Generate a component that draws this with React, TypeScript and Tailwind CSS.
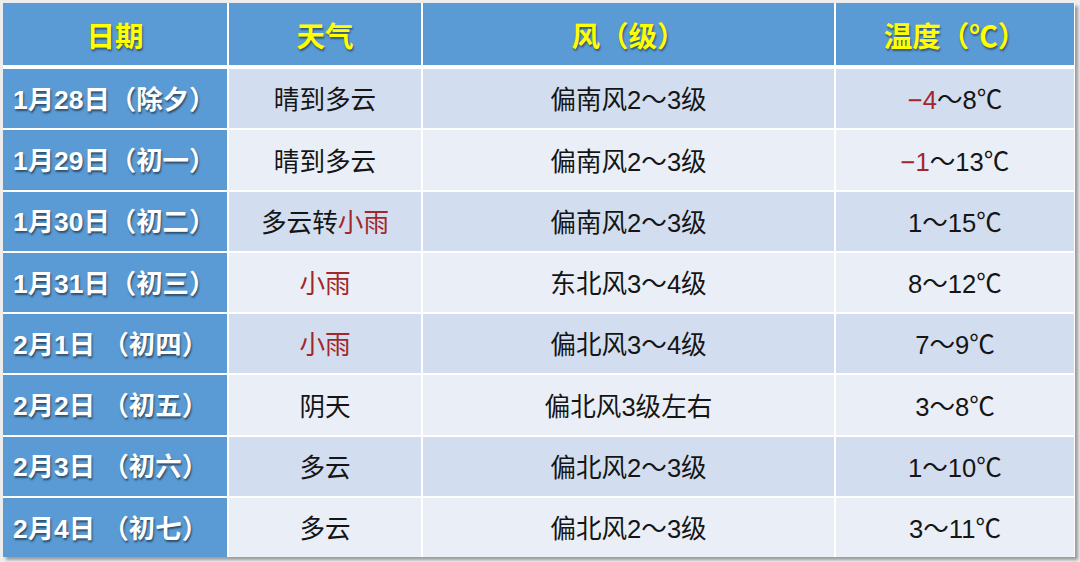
import React from "react";

type Seg = { t: string; red?: boolean };
type Row = { date: string; weather: Seg[]; wind: string; temp: Seg[] };

const rows: Row[] = [
  { date: "1月28日（除夕）", weather: [{ t: "晴到多云" }], wind: "偏南风2～3级", temp: [{ t: "−4", red: true }, { t: "～8℃" }] },
  { date: "1月29日（初一）", weather: [{ t: "晴到多云" }], wind: "偏南风2～3级", temp: [{ t: "−1", red: true }, { t: "～13℃" }] },
  { date: "1月30日（初二）", weather: [{ t: "多云转" }, { t: "小雨", red: true }], wind: "偏南风2～3级", temp: [{ t: "1～15℃" }] },
  { date: "1月31日（初三）", weather: [{ t: "小雨", red: true }], wind: "东北风3～4级", temp: [{ t: "8～12℃" }] },
  { date: "2月1日 （初四）", weather: [{ t: "小雨", red: true }], wind: "偏北风3～4级", temp: [{ t: "7～9℃" }] },
  { date: "2月2日 （初五）", weather: [{ t: "阴天" }], wind: "偏北风3级左右", temp: [{ t: "3～8℃" }] },
  { date: "2月3日 （初六）", weather: [{ t: "多云" }], wind: "偏北风2～3级", temp: [{ t: "1～10℃" }] },
  { date: "2月4日 （初七）", weather: [{ t: "多云" }], wind: "偏北风2～3级", temp: [{ t: "3～11℃" }] },
];

const font = "font-['Liberation_Sans','Noto_Sans_CJK_SC',sans-serif]";

function Segs({ segs }: { segs: Seg[] }) {
  return (
    <>
      {segs.map((s, i) => (
        <span key={i} className={s.red ? "text-[#a3262a]" : ""}>
          {s.t}
        </span>
      ))}
    </>
  );
}

export default function App() {
  const cols = "grid grid-cols-[224px_192px_411px_238px] gap-x-[2px]";
  return (
    <div className={`w-[1080px] h-[562px] bg-[#ededed] pt-[3px] pl-[3px] ${font} overflow-hidden`}>
      <div className="w-[1072px] bg-white pr-[1px] shadow-[3px_3px_3px_rgba(0,0,0,0.35)]">
        {/* header */}
        <div className={`${cols} h-[62px]`}>
          {["日期", "天气", "风（级）", "温度（℃）"].map((h, i) => (
            <div
              key={i}
              className="bg-[#5b9bd5] flex items-center justify-center pt-[7px] text-[28.5px] font-bold text-[#ffff00] [text-shadow:1px_2px_2px_rgba(0,0,0,0.45)]"
            >
              {h}
            </div>
          ))}
        </div>
        {/* body */}
        <div className="mt-[4px] h-[488px] grid grid-rows-8 gap-y-[2px]">
          {rows.map((r, i) => {
            const band = i % 2 === 0 ? "bg-[#d2deef]" : "bg-[#eaeff7]";
            return (
              <div key={i} className={cols}>
                <div className="bg-[#5b9bd5] flex items-center pl-[10px] pt-[4px] text-[26.4px] font-bold text-white whitespace-pre [text-shadow:1px_2px_2px_rgba(0,0,0,0.5)]">
                  {r.date}
                </div>
                <div className={`${band} flex items-center justify-center pt-[4px] text-[25.6px] text-[#151515]`}>
                  <Segs segs={r.weather} />
                </div>
                <div className={`${band} flex items-center justify-center pt-[4px] text-[25.6px] text-[#151515]`}>
                  {r.wind}
                </div>
                <div className={`${band} flex items-center justify-center pt-[4px] text-[25.6px] text-[#151515]`}>
                  <Segs segs={r.temp} />
                </div>
              </div>
            );
          })}
        </div>
      </div>
    </div>
  );
}
